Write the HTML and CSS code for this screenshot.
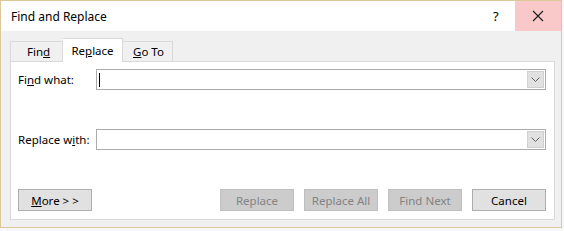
FILE: index.html
```html
<!DOCTYPE html>
<html lang="en">
<head>
    <meta charset="UTF-8">
    <title>Find and Replace</title>
    <link rel="stylesheet" href="styles.css">
</head>
<body>
    <div class="window">
        <div class="titlebar">
            <span class="title">Find and Replace</span>
            <span class="help">?</span>
            <span class="close">
                <svg width="12" height="12" viewBox="0 0 12 12">
                    <path d="M1 1 L11 11 M11 1 L1 11" stroke="#1a1a1a" stroke-width="1.1" fill="none"/>
                </svg>
            </span>
        </div>
        <div class="client">
            <div class="tabs">
                <div class="tab tab-find">Fin<u>d</u></div>
                <div class="tab selected">Re<u>p</u>lace</div>
                <div class="tab tab-goto"><u>G</u>o To</div>
            </div>
            <div class="panel">
                <div class="field-row">
                    <label>Fi<u>n</u>d what:</label>
                    <div class="combo">
                        <span class="caret"></span>
                        <span class="drop">
                            <svg width="9" height="5" viewBox="0 0 9 5">
                                <path d="M0.5 0.5 L4.5 4.5 L8.5 0.5" stroke="#606060" fill="none"/>
                            </svg>
                        </span>
                    </div>
                </div>
                <div class="field-row">
                    <label>Replace w<u>i</u>th:</label>
                    <div class="combo">
                        <span class="drop">
                            <svg width="9" height="5" viewBox="0 0 9 5">
                                <path d="M0.5 0.5 L4.5 4.5 L8.5 0.5" stroke="#606060" fill="none"/>
                            </svg>
                        </span>
                    </div>
                </div>
                <div class="buttons">
                    <button class="btn"><u>M</u>ore &gt; &gt;</button>
                    <div class="right-buttons">
                        <button class="btn" disabled>Replace</button>
                        <button class="btn" disabled>Replace All</button>
                        <button class="btn" disabled>Find Next</button>
                        <button class="btn">Cancel</button>
                    </div>
                </div>
            </div>
        </div>
    </div>
</body>
</html>
```

FILE: styles.css
```css
body {
    margin: 0;
    background: #f7f7f7;
    font-family: "Noto Sans", "Open Sans", sans-serif;
    font-size: 11.5px;
    color: #000;
}
.window {
    width: 560px;
    height: 226px;
    border: 1px solid #d9c99a;
    background: #f0f0f0;
}
.titlebar {
    height: 30px;
    display: flex;
    align-items: center;
    background: #fff;
}
.title {
    flex: 1;
    padding-left: 10px;
    font-size: 12px;
}
.help {
    width: 20px;
    margin-right: 2px;
    font-size: 13px;
}
.close {
    width: 46px;
    height: 30px;
    background: #f9c9c9;
    display: flex;
    align-items: center;
    justify-content: center;
}
.client {
    padding: 7px 6px 0 9px;
}
.tabs {
    display: flex;
    align-items: flex-end;
    height: 23px;
}
.tab {
    height: 20px;
    line-height: 20px;
    box-sizing: border-box;
    border: 1px solid #d9d9d9;
    border-bottom: none;
    background: #f0f0f0;
}
.tab-find {
    width: 53px;
    padding-left: 16px;
}
.tab-goto {
    width: 50px;
    padding-left: 10px;
    border-left: none;
}
.tab.selected {
    width: 60px;
    height: 24px;
    line-height: 23px;
    margin-bottom: -1px;
    text-align: center;
    background: #fff;
    position: relative;
    border-left: none;
}
.panel {
    height: 150px;
    border: 1px solid #d9d9d9;
    background: #fff;
    padding: 7px 6px 0 7px;
}
.field-row {
    display: flex;
    align-items: center;
    height: 21px;
    margin-bottom: 39px;
}
.field-row label {
    width: 78px;
    flex-shrink: 0;
    white-space: nowrap;
}
.combo {
    width: 448px;
    height: 19px;
    flex-shrink: 0;
    border: 1px solid #ababab;
    display: flex;
    align-items: center;
}
.caret {
    width: 1px;
    height: 14px;
    background: #000;
    margin-left: 2px;
}
.drop {
    margin-left: auto;
    width: 17px;
    height: 17px;
    margin-right: 1px;
    background: #e1e1e1;
    border: 1px solid #d0d0d0;
    box-sizing: border-box;
    display: flex;
    align-items: center;
    justify-content: center;
}
.buttons {
    display: flex;
    justify-content: space-between;
    padding-right: 2px;
}
.right-buttons {
    display: flex;
    gap: 10px;
}
.btn {
    width: 74px;
    height: 22px;
    padding: 0;
    border: 1px solid #adadad;
    background: #e1e1e1;
    font-family: "Noto Sans", "Open Sans", sans-serif;
    font-size: 11.5px;
    color: #000;
}
.btn:disabled {
    background: #cccccc;
    border-color: #bfbfbf;
    color: #838383;
}
```
